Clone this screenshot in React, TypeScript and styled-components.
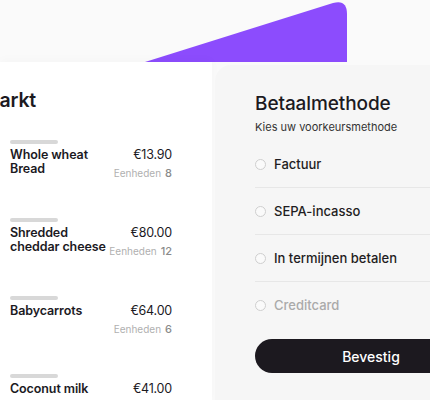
import styled, { createGlobalStyle } from 'styled-components';

const GlobalStyle = createGlobalStyle`
  html, body {
    margin: 0;
    padding: 0;
    background: #fafafa;
  }
  body {
    font-family: Inter, "Noto Sans", "Liberation Sans", sans-serif;
    color: #1c1a1f;
  }
`;

const Page = styled.div`
  width: 430px;
  height: 400px;
  overflow: hidden;
  display: flex;
  flex-direction: column;
  background: #fafafa;
`;

const TopBand = styled.div`
  height: 62px;
  flex: none;
  display: flex;
  align-items: flex-end;
  padding-left: 145px;
`;

const Panels = styled.div`
  flex: 1;
  display: flex;
  align-items: flex-start;
`;

const CartCard = styled.div`
  width: 212px;
  flex: none;
  height: 340px;
  background: #ffffff;
  box-shadow: 0 -2px 10px rgba(0, 0, 0, 0.025);
  padding: 0 0 0 10px;
  box-sizing: border-box;
  overflow: hidden;
`;

const CartTitle = styled.h2`
  margin: 28px 0 0 -83px;
  font-size: 19.5px;
  font-weight: 600;
  letter-spacing: -0.2px;
  line-height: 20px;
  white-space: nowrap;
`;

const ItemList = styled.div`
  margin-top: 30px;
  display: flex;
  flex-direction: column;
  gap: 32px;
  width: 162px;
`;

const Item = styled.div`
  display: flex;
  flex-direction: column;
  height: 46px;
`;

const Skeleton = styled.div`
  width: 48px;
  height: 4px;
  border-radius: 2px;
  background: #d8d8d8;
  margin-bottom: 4px;
`;

const ItemRow = styled.div`
  display: flex;
  justify-content: space-between;
  align-items: flex-start;
`;

const ItemName = styled.div`
  font-size: 12.5px;
  font-weight: 600;
  line-height: 14px;
  width: 104px;
  letter-spacing: -0.1px;
`;

const PriceCol = styled.div`
  display: flex;
  flex-direction: column;
  align-items: flex-end;
`;

const Price = styled.div`
  font-size: 12.5px;
  font-weight: 400;
  line-height: 14px;
  letter-spacing: -0.2px;
`;

const Units = styled.div`
  margin-top: 4px;
  font-size: 10px;
  color: #b0b0b0;
  white-space: nowrap;

  b {
    font-size: 11px;
    font-weight: 500;
    color: #8a8a8a;
    margin-left: 4px;
  }
`;

const PayCard = styled.div`
  margin-top: 3px;
  margin-left: 3px;
  width: 260px;
  flex: none;
  height: 340px;
  background: #f6f6f6;
  border-top-left-radius: 16px;
  padding: 28px 0 0 40px;
  box-sizing: border-box;
`;

const PayTitle = styled.h2`
  margin: 0;
  font-size: 19px;
  font-weight: 500;
  line-height: 22px;
  letter-spacing: -0.1px;
`;

const PaySub = styled.p`
  margin: 5px 0 0;
  font-size: 11px;
  line-height: 14px;
  color: #333;
`;

const Options = styled.div`
  margin-top: 7px;
  display: flex;
  flex-direction: column;
`;

const Option = styled.label<{ $disabled?: boolean }>`
  display: flex;
  align-items: center;
  gap: 8px;
  height: 46px;
  border-bottom: 1px solid ${(p) => (p.$disabled ? 'transparent' : '#e7e7e7')};
  font-size: 13px;
  font-weight: 500;
  color: ${(p) => (p.$disabled ? '#aaaaaa' : '#1f1d22')};
`;

const Radio = styled.span`
  width: 9px;
  height: 9px;
  border: 1.5px solid #cfcfcf;
  border-radius: 50%;
  background: #fafafa;
`;

const Confirm = styled.button`
  margin-top: 10px;
  width: 232px;
  height: 34px;
  border: none;
  border-radius: 17px;
  background: #1c191f;
  color: #ffffff;
  font-family: inherit;
  font-size: 14px;
  font-weight: 500;
`;

const Wedge = () => (
  <svg width="202" height="62" viewBox="0 0 202 62">
    <path d="M0 62 L188 3 Q202 -1 202 14 L202 62 Z" fill="#8c4cfd" />
  </svg>
);

const items = [
  { name: 'Whole wheat Bread', price: '€13.90', units: 8 },
  { name: 'Shredded cheddar cheese', price: '€80.00', units: 12 },
  { name: 'Babycarrots', price: '€64.00', units: 6 },
  { name: 'Coconut milk', price: '€41.00', units: 4 },
];

const methods = ['Factuur', 'SEPA-incasso', 'In termijnen betalen'];

const App = () => {
  return (
    <Page>
      <GlobalStyle />
      <TopBand>
        <Wedge />
      </TopBand>
      <Panels>
        <CartCard>
          <CartTitle>Supermarkt</CartTitle>
          <ItemList>
            {items.map((it) => (
              <Item key={it.name}>
                <Skeleton />
                <ItemRow>
                  <ItemName>{it.name}</ItemName>
                  <PriceCol>
                    <Price>{it.price}</Price>
                    <Units>
                      Eenheden<b>{it.units}</b>
                    </Units>
                  </PriceCol>
                </ItemRow>
              </Item>
            ))}
          </ItemList>
        </CartCard>
        <PayCard>
          <PayTitle>Betaalmethode</PayTitle>
          <PaySub>Kies uw voorkeursmethode</PaySub>
          <Options>
            {methods.map((m) => (
              <Option key={m}>
                <Radio />
                {m}
              </Option>
            ))}
            <Option $disabled>
              <Radio />
              Creditcard
            </Option>
          </Options>
          <Confirm>Bevestig</Confirm>
        </PayCard>
      </Panels>
    </Page>
  );
};

export default App;
